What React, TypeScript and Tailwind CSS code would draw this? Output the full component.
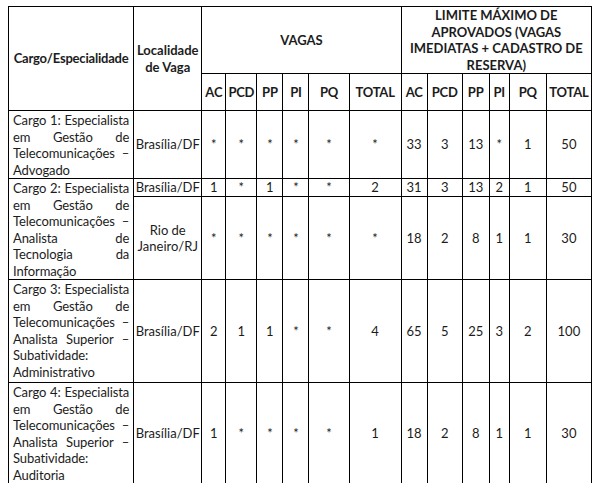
import React from 'react';

const cols = [125, 68, 24, 31, 26, 26, 40, 52, 26, 35, 27, 20, 37, 45];

type Row = {
  cargo?: string;
  span?: number;
  h: string;
  local: string;
  vals: string[];
};

const rows: Row[] = [
  {
    cargo: 'Cargo 1: Especialista em Gestão de Telecomunicações – Advogado',
    h: 'h-[68px]',
    local: 'Brasília/DF',
    vals: ['*', '*', '*', '*', '*', '*', '33', '3', '13', '*', '1', '50'],
  },
  {
    cargo: 'Cargo 2: Especialista em Gestão de Telecomunicações – Analista de Tecnologia da Informação',
    span: 2,
    h: 'h-[18px]',
    local: 'Brasília/DF',
    vals: ['1', '*', '1', '*', '*', '2', '31', '3', '13', '2', '1', '50'],
  },
  {
    h: 'h-[81px]',
    local: 'Rio de Janeiro/RJ',
    vals: ['*', '*', '*', '*', '*', '*', '18', '2', '8', '1', '1', '30'],
  },
  {
    cargo: 'Cargo 3: Especialista em Gestão de Telecomunicações – Analista Superior – Subatividade: Administrativo',
    h: 'h-[103px]',
    local: 'Brasília/DF',
    vals: ['2', '1', '1', '*', '*', '4', '65', '5', '25', '3', '2', '100'],
  },
  {
    cargo: 'Cargo 4: Especialista em Gestão de Telecomunicações – Analista Superior – Subatividade: Auditoria',
    h: 'h-[101px]',
    local: 'Brasília/DF',
    vals: ['1', '*', '*', '*', '*', '1', '18', '2', '8', '1', '1', '30'],
  },
];

const sub = ['AC', 'PCD', 'PP', 'PI', 'PQ', 'TOTAL'];

const cell = 'border border-black align-middle text-center p-0';

export default function App() {
  return (
    <div className="min-h-[483px] w-[595px] bg-white pl-[8px] pt-[6px] text-[#1c1c1c] font-['Lato','Liberation_Sans',sans-serif] text-[13px] leading-[16.5px]">
      <table className="border-collapse table-fixed w-[584px]">
        <colgroup>
          {cols.map((w, i) => (
            <col key={i} style={{ width: w }} />
          ))}
        </colgroup>
        <thead>
          <tr className="h-[66px]">
            <th rowSpan={2} className={`${cell} font-bold tracking-[-0.2px]`}>Cargo/Especialidade</th>
            <th rowSpan={2} className={`${cell} font-bold`}>
              Localidade
              <br />
              de Vaga
            </th>
            <th colSpan={6} className={`${cell} font-bold`}>VAGAS</th>
            <th colSpan={6} className={`${cell} font-bold px-[4px]`}>
              LIMITE MÁXIMO DE
              <br />
              APROVADOS (VAGAS
              <br />
              IMEDIATAS + CADASTRO DE
              <br />
              RESERVA)
            </th>
          </tr>
          <tr className="h-[37px]">
            {[...sub, ...sub].map((s, i) => (
              <th key={i} className={`${cell} font-bold tracking-[-0.2px]`}>
                {s}
              </th>
            ))}
          </tr>
        </thead>
        <tbody>
          {rows.map((r, i) => (
            <tr key={i} className={r.h}>
              {r.cargo && (
                <td rowSpan={r.span} className="border border-black align-top px-[4px] pt-[1px] text-justify tracking-[-0.1px]">
                  {r.cargo}
                </td>
              )}
              <td className={`${cell} px-[1px]`}>{r.local}</td>
              {r.vals.map((v, j) => (
                <td key={j} className={cell}>
                  {v}
                </td>
              ))}
            </tr>
          ))}
        </tbody>
      </table>
    </div>
  );
}
